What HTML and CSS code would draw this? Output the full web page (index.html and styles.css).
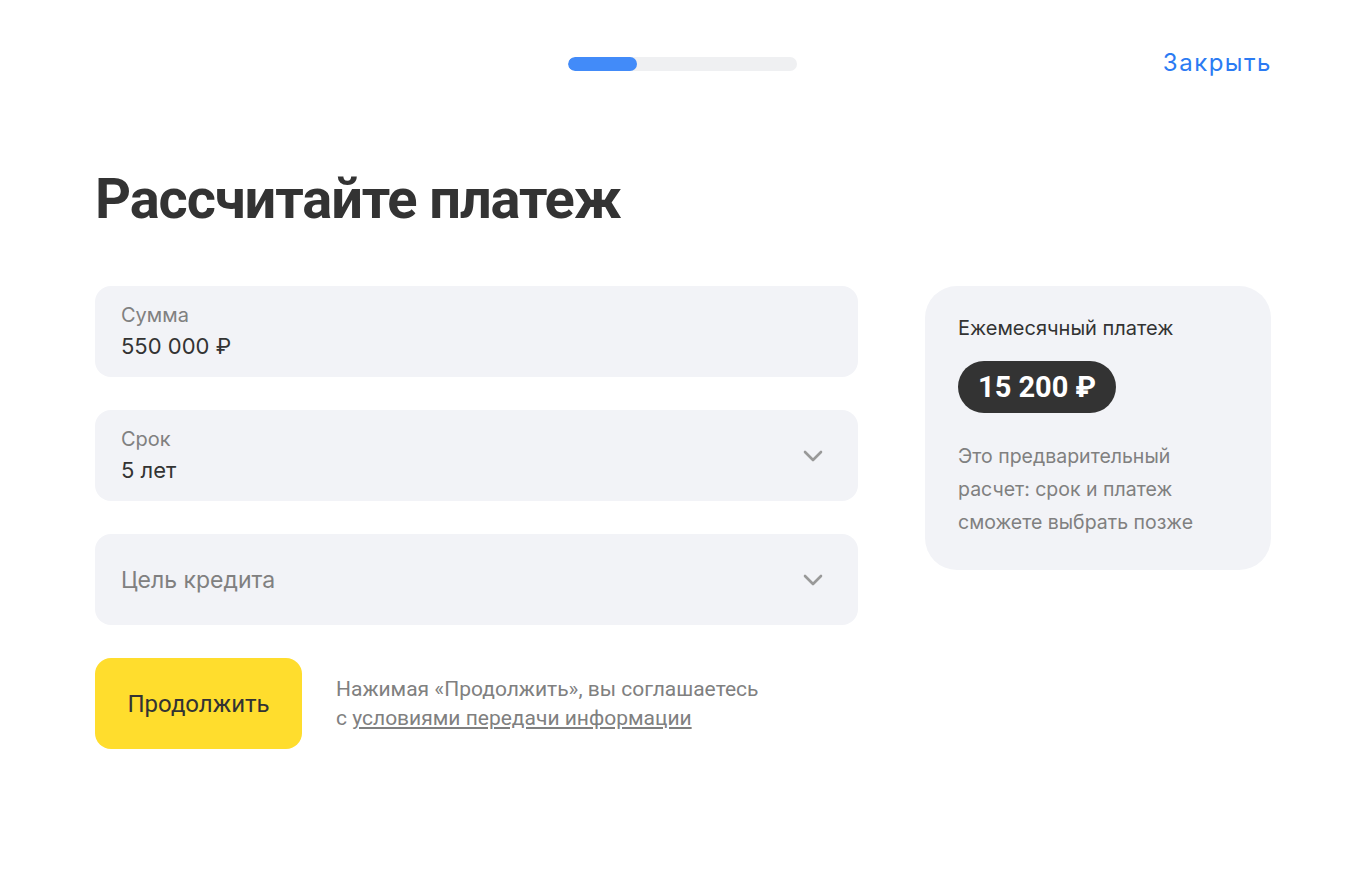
FILE: index.html
```html
<!DOCTYPE html>
<html lang="ru">
<head>
    <meta charset="UTF-8">
    <meta name="viewport" content="width=device-width, initial-scale=1.0">
    <title>Рассчитайте платеж</title>
    <link rel="stylesheet" href="styles.css">
</head>
<body>
    <header class="header">
        <div class="progress">
            <div class="progress-fill" style="width: 30%"></div>
        </div>
        <a class="close" href="#">Закрыть</a>
    </header>

    <main class="page">
        <h1>Рассчитайте платеж</h1>

        <div class="layout">
            <div class="form">
                <div class="field">
                    <span class="field-label">Сумма</span>
                    <span class="field-value">550 000 ₽</span>
                </div>

                <div class="field field-select">
                    <div class="field-text">
                        <span class="field-label">Срок</span>
                        <span class="field-value">5 лет</span>
                    </div>
                    <svg class="chevron" width="20" height="12" viewBox="0 0 20 12" fill="none">
                        <path d="M2 2l8 8 8-8" stroke="currentColor" stroke-width="2.6" stroke-linecap="round" stroke-linejoin="round"/>
                    </svg>
                </div>

                <div class="field field-select">
                    <span class="field-placeholder">Цель кредита</span>
                    <svg class="chevron" width="20" height="12" viewBox="0 0 20 12" fill="none">
                        <path d="M2 2l8 8 8-8" stroke="currentColor" stroke-width="2.6" stroke-linecap="round" stroke-linejoin="round"/>
                    </svg>
                </div>

                <div class="actions">
                    <button class="button">Продолжить</button>
                    <p class="legal">
                        Нажимая «Продолжить», вы соглашаетесь<br>
                        с <a href="#">условиями передачи информации</a>
                    </p>
                </div>
            </div>

            <aside class="summary">
                <div class="summary-title">Ежемесячный платеж</div>
                <div class="summary-amount">15 200 ₽</div>
                <p class="summary-note">
                    Это предварительный<br>
                    расчет: срок и платеж<br>
                    сможете выбрать позже
                </p>
            </aside>
        </div>
    </main>
</body>
</html>
```

FILE: styles.css
```css
* {
    margin: 0;
    padding: 0;
    box-sizing: border-box;
}

body {
    font-family: Inter, "Liberation Sans", sans-serif;
    background: #fff;
    color: #333;
}

.header {
    position: relative;
    height: 126px;
    display: flex;
    justify-content: center;
    padding-top: 57px;
    padding-left: 5px;
}

.progress {
    width: 229px;
    height: 14px;
    background: #eff0f2;
    border-radius: 7px;
    overflow: hidden;
}

.progress-fill {
    height: 100%;
    background: #428bf9;
    border-radius: 7px;
}

.close {
    position: absolute;
    right: 88px;
    top: 48px;
    font-size: 24px;
    line-height: 30px;
    letter-spacing: 1.5px;
    color: #2b7bf3;
    text-decoration: none;
}

.page {
    width: 1176px;
    margin-left: 95px;
}

h1 {
    font-family: Roboto, sans-serif;
    font-size: 56px;
    font-weight: 700;
    line-height: 68px;
    letter-spacing: -1.1px;
    color: #333;
    margin-top: 39px;
    margin-bottom: 53px;
}

.layout {
    display: grid;
    grid-template-columns: 763px 346px;
    gap: 67px;
    align-items: start;
}

.form {
    display: flex;
    flex-direction: column;
    gap: 33px;
}

.field {
    height: 91px;
    background: #f2f3f7;
    border-radius: 16px;
    padding: 0 26px;
    display: flex;
    flex-direction: column;
    justify-content: center;
}

.field-select {
    flex-direction: row;
    align-items: center;
    justify-content: space-between;
    padding-right: 35px;
}

.field-text {
    display: flex;
    flex-direction: column;
}

.field-label {
    font-size: 20px;
    line-height: 28px;
    color: #808080;
}

.field-value {
    font-size: 22px;
    line-height: 34px;
    color: #333;
}

.field-placeholder {
    font-size: 23px;
    color: #808080;
}

.chevron {
    color: #999;
}

.actions {
    display: flex;
    align-items: center;
    gap: 34px;
}

.button {
    width: 207px;
    height: 91px;
    background: #ffdd2d;
    border: none;
    border-radius: 16px;
    font-family: Roboto, sans-serif;
    font-size: 24px;
    color: #333;
    cursor: pointer;
}

.legal {
    font-family: Roboto, sans-serif;
    font-size: 21px;
    line-height: 29px;
    color: #808080;
}

.legal a {
    color: #808080;
}

.summary {
    height: 284px;
    background: #f2f3f7;
    border-radius: 32px;
    padding: 29px 33px;
}

.summary-title {
    font-size: 20px;
    line-height: 26px;
    color: #333;
}

.summary-amount {
    display: inline-block;
    margin-top: 20px;
    height: 52px;
    padding: 0 20px;
    background: #333;
    border-radius: 26px;
    color: #fff;
    font-family: Roboto, sans-serif;
    font-size: 29px;
    font-weight: 700;
    line-height: 52px;
}

.summary-note {
    margin-top: 27px;
    font-size: 19.5px;
    line-height: 33px;
    color: #808080;
}
```
